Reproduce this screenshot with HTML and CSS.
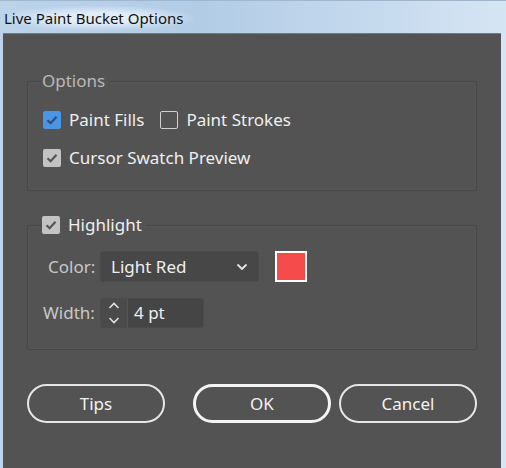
FILE: index.html
```html
<!DOCTYPE html>
<html>
<head>
<meta charset="utf-8">
<link rel="stylesheet" href="styles.css">
</head>
<body>
<div class="window">
  <div class="titlebar"><span class="title">Live Paint Bucket Options</span></div>
  <div class="panel">
    <fieldset class="group group-options">
      <legend class="legend">Options</legend>
      <div class="row">
        <label class="check"><span class="box box-blue"><svg viewBox="0 0 18 18" width="18" height="18"><path d="M4.5 9.2 L7.6 12.2 L13.5 5.8" fill="none" stroke="#2b4f7a" stroke-width="2.2"/></svg></span>Paint Fills</label>
        <label class="check"><span class="box box-empty"></span>Paint Strokes</label>
      </div>
      <div class="row">
        <label class="check"><span class="box box-gray"><svg viewBox="0 0 18 18" width="18" height="18"><path d="M4.5 9.2 L7.6 12.2 L13.5 5.8" fill="none" stroke="#555" stroke-width="2.2"/></svg></span>Cursor Swatch Preview</label>
      </div>
    </fieldset>
    <fieldset class="group group-highlight">
      <legend class="legend legend-check"><label class="check"><span class="box box-gray"><svg viewBox="0 0 18 18" width="18" height="18"><path d="M4.5 9.2 L7.6 12.2 L13.5 5.8" fill="none" stroke="#555" stroke-width="2.2"/></svg></span>Highlight</label></legend>
      <div class="field-row">
        <span class="field-label label-color">Color:</span>
        <div class="select"><span>Light Red</span><svg class="chev" viewBox="0 0 12 8" width="12" height="8"><path d="M1.5 1.5 L6 6 L10.5 1.5" fill="none" stroke="#e6e6e6" stroke-width="1.8"/></svg></div>
        <div class="swatch"></div>
      </div>
      <div class="field-row field-row-width">
        <span class="field-label">Width:</span>
        <div class="spin">
          <div class="spin-arrows"><svg viewBox="0 0 26 30" width="26" height="30"><path d="M8.5 10 L13 5.5 L17.5 10" fill="none" stroke="#e0e0e0" stroke-width="1.6"/><path d="M8.5 20 L13 24.5 L17.5 20" fill="none" stroke="#e0e0e0" stroke-width="1.6"/></svg></div>
          <div class="spin-value">4 pt</div>
        </div>
      </div>
    </fieldset>
    <div class="buttons">
      <button class="btn">Tips</button>
      <div class="btn-pair">
        <button class="btn btn-default">OK</button>
        <button class="btn">Cancel</button>
      </div>
    </div>
  </div>
</div>
</body>
</html>
```

FILE: styles.css
```css
html, body {
  margin: 0;
  padding: 0;
}
body {
  width: 506px;
  height: 468px;
  overflow: hidden;
  font-family: "Noto Sans", "Open Sans", sans-serif;
}
.window {
  box-sizing: border-box;
  width: 506px;
  height: 468px;
  display: flex;
  flex-direction: column;
  padding: 0 5px 0 3px;
  background: linear-gradient(90deg, #bcd3ea 0%, #b2cce6 40%, #c6daee 75%, #d6e5f3 100%);
  border-top: 1px solid #9fb6cc;
}
.titlebar {
  height: 32px;
  flex: none;
  display: flex;
  align-items: center;
  padding-left: 1px;
}
.title {
  font-size: 15px;
  color: #111;
  background: radial-gradient(ellipse at center, rgba(230,240,250,0.9) 30%, rgba(230,240,250,0) 75%);
  padding: 2px 10px 2px 0;
  margin-top: 1px;
}
.panel {
  flex: 1;
  background: #535353;
  border-top: 1px solid #6d7c8b;
  padding: 0 24px 0 24px;
  display: flex;
  flex-direction: column;
  color: #ececec;
}
.group {
  margin: 0;
  border: 1px solid #474747;
  border-radius: 3px;
  box-shadow: inset 0 0 0 1px #585858;
  padding: 0 14px 0 15px;
}
.group-options {
  margin-top: 36px;
  height: 121px;
  box-sizing: border-box;
}
.legend {
  padding: 0 4px 0 0;
  margin-left: -1px;
  font-size: 17px;
  line-height: 22px;
  color: #b9b9b9;
}
.row {
  display: flex;
  gap: 16px;
  margin-top: 12px;
  height: 31px;
  align-items: center;
}
.row + .row {
  margin-top: 7px;
}
.check {
  display: flex;
  align-items: center;
  gap: 8px;
  font-size: 17px;
  color: #efefef;
}
.box {
  width: 18px;
  height: 18px;
  border-radius: 2px;
  box-sizing: border-box;
  display: block;
  flex: none;
}
.box svg { display: block; }
.box-blue { background: #4b95e7; }
.box-gray { background: #c3c3c3; }
.box-empty { border: 1px solid #cfcfcf; }
.group-highlight {
  margin-top: 23px;
  height: 136px;
  box-sizing: border-box;
  padding-left: 15px;
}
.legend-check {
  color: #efefef;
}
.field-row {
  display: flex;
  align-items: center;
  height: 31px;
  margin-top: 15px;
}
.field-row-width {
  margin-top: 15px;
}
.field-label {
  font-size: 17px;
  color: #c8c8c8;
  width: 57px;
  flex: none;
}
.label-color {
  padding-left: 5px;
  width: 52px;
}
.select {
  box-sizing: border-box;
  width: 159px;
  height: 31px;
  background: #474747;
  border: 1px solid #4b4b4b;
  border-radius: 3px;
  display: flex;
  align-items: center;
  justify-content: space-between;
  padding: 0 10px 0 10px;
  font-size: 17px;
  color: #efefef;
}
.chev { display: block; }
.swatch {
  box-sizing: border-box;
  width: 32px;
  height: 31px;
  margin-left: 16px;
  border: 2px solid #ffffff;
  background: #f64b4b;
}
.spin {
  display: flex;
  height: 30px;
  width: 104px;
  box-sizing: border-box;
  border: 1px solid #4b4b4b;
  border-radius: 3px;
  background: #474747;
  overflow: hidden;
}
.spin-arrows {
  width: 26px;
  border-right: 1px solid #555;
  background: #4a4a4a;
}
.spin-arrows svg { display: block; margin-top: -1px; }
.spin-value {
  flex: 1;
  font-size: 17px;
  color: #efefef;
  padding-left: 6px;
  display: flex;
  align-items: center;
  background: #454545;
}
.buttons {
  display: flex;
  justify-content: space-between;
  margin-top: 34px;
}
.btn-pair {
  display: flex;
  gap: 8px;
}
.btn {
  box-sizing: border-box;
  width: 138px;
  height: 39px;
  border: 2px solid #e6e6e6;
  border-radius: 20px;
  background: transparent;
  color: #f2f2f2;
  font-family: "Noto Sans", "Open Sans", sans-serif;
  font-size: 17px;
  padding: 0;
}
.btn-default {
  border-width: 3px;
  border-color: #f4f4f4;
}
```
